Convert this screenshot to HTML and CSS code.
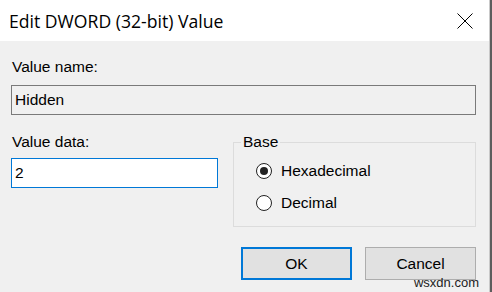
FILE: index.html
```html
<!DOCTYPE html>
<html>
<head>
<meta charset="utf-8">
<link rel="stylesheet" href="styles.css">
</head>
<body>
<div class="window">
  <div class="dialog">
    <div class="titlebar">
      <span class="title">Edit DWORD (32-bit) Value</span>
      <svg class="close" width="16" height="16" viewBox="0 0 16 16"><path d="M0.5 0.5 L15.5 15.5 M15.5 0.5 L0.5 15.5" stroke="#000" stroke-width="1" fill="none"/></svg>
    </div>
    <div class="content">
      <div class="label">Value name:</div>
      <div class="field disabled">Hidden</div>
      <div class="row">
        <div class="col">
          <div class="label">Value data:</div>
          <div class="field active">2</div>
        </div>
        <fieldset class="group">
          <legend>Base</legend>
          <div class="radio"><span class="dot checked"></span><span>Hexadecimal</span></div>
          <div class="radio"><span class="dot"></span><span>Decimal</span></div>
        </fieldset>
      </div>
      <div class="buttons">
        <div class="btn default">OK</div>
        <div class="btn">Cancel</div>
      </div>
      <div class="watermark">wsxdn.com</div>
    </div>
  </div>
  <div class="edge-light"></div>
  <div class="edge"></div>
</div>
</body>
</html>
```
FILE: styles.css
```css
html, body {
  margin: 0;
  padding: 0;
  background: #f0f0f0;
}
.window {
  display: flex;
  width: 492px;
  height: 292px;
  overflow: hidden;
}
.dialog {
  width: 489px;
  display: flex;
  flex-direction: column;
  background: #f0f0f0;
}
.edge-light {
  width: 1px;
  background: #c9c9c9;
}
.edge {
  width: 2px;
  background: #5d5d5d;
}
.titlebar {
  height: 41px;
  background: #fff;
  display: flex;
  align-items: center;
  justify-content: space-between;
  padding: 0 16px 0 9px;
  box-sizing: border-box;
}
.title {
  font-family: "Open Sans", "Noto Sans", sans-serif;
  font-size: 17.6px;
  color: #000;
}
.close {
  display: block;
}
.content {
  position: relative;
  flex: 1;
  padding: 17px 13px 0 11px;
  font-family: "Liberation Sans", Arial, sans-serif;
  font-size: 15.5px;
  line-height: 18px;
  color: #000;
}
.label {
  padding-left: 1px;
  height: 18px;
}
.field {
  margin-top: 9px;
  height: 30px;
  box-sizing: border-box;
  padding: 5px 3px 0;
}
.field.disabled {
  border: 1px solid #7a7a7a;
  background: #f0f0f0;
}
.field.active {
  margin-top: 7px;
  border: 1px solid #0078d7;
  background: #fff;
  width: 207px;
}
.row {
  display: flex;
  gap: 15px;
  margin-top: 18px;
}
.col {
  width: 207px;
}
.group {
  flex: 1;
  margin: 0;
  padding: 11px 0 14px 22px;
  border: 1px solid #dcdcdc;
  min-width: 0;
}
.group legend {
  padding: 0 2px;
  margin-left: -15px;
  line-height: 18px;
}
.radio {
  display: flex;
  align-items: center;
  gap: 9px;
  height: 18px;
}
.radio + .radio {
  margin-top: 14px;
}
.dot {
  width: 16px;
  height: 16px;
  box-sizing: border-box;
  border: 1px solid #222;
  border-radius: 50%;
  background: #fff;
  display: flex;
  align-items: center;
  justify-content: center;
}
.dot.checked::after {
  content: "";
  width: 8px;
  height: 8px;
  border-radius: 50%;
  background: #222;
}
.buttons {
  display: flex;
  justify-content: flex-end;
  gap: 13px;
  margin-top: 20px;
}
.btn {
  width: 111px;
  height: 33px;
  box-sizing: border-box;
  border: 1px solid #adadad;
  background: #e1e1e1;
  display: flex;
  align-items: center;
  justify-content: center;
}
.btn.default {
  border: 2px solid #0078d7;
}
.watermark {
  position: absolute;
  right: 10px;
  bottom: 2px;
  font-family: "Liberation Sans", Arial, sans-serif;
  font-size: 13px;
  line-height: 14px;
  color: #222;
}
```
